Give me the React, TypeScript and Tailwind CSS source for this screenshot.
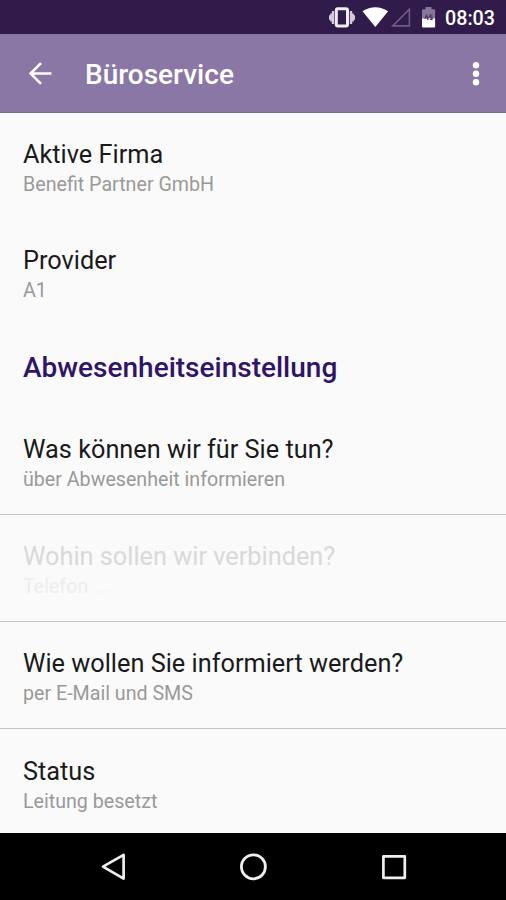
import React from "react";

type RowProps = { title: string; sub: React.ReactNode; disabled?: boolean; className: string };

function Row({ title, sub, disabled, className }: RowProps) {
  return (
    <div className={`flex shrink-0 flex-col pl-[23px] whitespace-nowrap ${className}`}>
      <div className={`text-[25.3px] leading-[30px] ${disabled ? "text-[#d9d9d9]" : "text-[#1a1a1a]"}`}>{title}</div>
      <div className={`text-[19.65px] leading-[30px] ${disabled ? "text-[#ededed]" : "text-[#999999]"}`}>{sub}</div>
    </div>
  );
}

function StatusBar() {
  return (
    <div className="flex h-[34px] shrink-0 items-center justify-end bg-[#311b4b] pr-[11px] text-white">
      <svg width="112" height="34" viewBox="326 0 112 34" className="block">
        <path d="M334.2 11h-2.4v2.5h-1.6v1.8H329v4.4h1.2v1.8h1.6V24h2.4ZM349.8 11h2.4v2.5h1.6v1.8h1.2v4.4h-1.2v1.8h-1.6V24h-2.4Z" fill="#d3cadd" />
        <rect x="336.3" y="8.7" width="11.2" height="17.2" rx="1.5" fill="none" stroke="#f1edf5" strokeWidth="3" />
        <path d="M375.3 27 362.5 11.2Q375.3 3.4 388.1 11.2Z" fill="#fff" />
        <path d="M409.4 9.3V25.9H392.8Z" fill="none" stroke="#6f5d83" strokeWidth="1.6" />
        <path d="M422 10.2q0-1 1-1h2.5V7h6v2.2h2.6q1 0 1 1V19H422Z" fill="#85769a" />
        <path d="M422 18.6h13.1v8q0 1-1 1H423q-1 0-1-1Z" fill="#fff" />
        <path d="M427 14.6 425.2 18h3.2M427.8 16v4.2M432.4 15h-2.4v2.2h2v2.2h-2.2" fill="none" stroke="#49345f" strokeWidth="1.2" />
      </svg>
      <div className="w-[57px] pt-[4px] text-right text-[19.7px] leading-[30px] font-medium"><span>08:03</span></div>
    </div>
  );
}

function AppBar() {
  return (
    <div className="flex h-[79px] shrink-0 items-center border-b border-[#7b6995] bg-[#8b77a6] pt-[2px] text-white">
      <svg width="24" height="24" viewBox="0 0 24 24" className="ml-[28px] block" fill="none" stroke="currentColor" strokeWidth="2.6">
        <path d="M23.4 11.5H2.4M13 1.2 2.6 11.5l10.4 10.3" />
      </svg>
      <div className="ml-[33px] grow pt-[2px] text-[28px] leading-[36px] font-medium"><span>Büroservice</span></div>
      <svg width="8" height="26" viewBox="0 0 8 26" className="mr-[26px] block" fill="currentColor">
        <circle cx="4" cy="4.3" r="3.2" />
        <circle cx="4" cy="12.8" r="3.2" />
        <circle cx="4" cy="21.3" r="3.2" />
      </svg>
    </div>
  );
}

function NavBar() {
  return (
    <div className="flex h-[67px] shrink-0 items-center justify-between bg-black pr-[98px] pl-[100px]">
      <svg width="26" height="30" viewBox="0 0 26 30" fill="none" stroke="#efefef" strokeWidth="2.7" strokeLinejoin="round">
        <path d="M23.6 2.8V26.6L3 14.7Z" />
      </svg>
      <svg width="28" height="28" viewBox="0 0 28 28" fill="none" stroke="#efefef" strokeWidth="2.8">
        <circle cx="14.4" cy="13.8" r="12" />
      </svg>
      <svg width="28" height="28" viewBox="0 0 28 28" fill="none" stroke="#efefef" strokeWidth="2.7" strokeLinejoin="round">
        <rect x="3.4" y="3.4" width="21.4" height="21.4" />
      </svg>
    </div>
  );
}

export default function App() {
  return (
    <div className="flex h-[900px] w-[506px] flex-col overflow-hidden bg-[#fafafa] font-[Roboto,sans-serif]">
      <StatusBar />
      <AppBar />
      <main className="flex h-[720px] shrink-0 flex-col">
        <Row className="h-[106px] pt-[27px]" title="Aktive Firma" sub="Benefit Partner GmbH" />
        <Row className="h-[106px] pt-[27px]" title="Provider" sub="A1" />
        <h2 className="h-[83px] shrink-0 pt-[25px] pl-[23px] text-[28px] leading-[36px] font-medium text-[#2f1468]">Abwesenheitseinstellung</h2>
        <Row className="h-[107px] border-b border-[#c4c4c4] pt-[27px]" title="Was können wir für Sie tun?" sub="über Abwesenheit informieren" />
        <Row
          className="h-[107px] border-b border-[#c4c4c4] pt-[27px]"
          title="Wohin sollen wir verbinden?"
          sub={<>Telefon <span className="text-[#f3f3f3]">...</span></>}
          disabled
        />
        <Row className="h-[107px] border-b border-[#c4c4c4] pt-[27px]" title="Wie wollen Sie informiert werden?" sub="per E-Mail und SMS" />
        <Row className="h-[104px] pt-[28px]" title="Status" sub="Leitung besetzt" />
      </main>
      <NavBar />
    </div>
  );
}
